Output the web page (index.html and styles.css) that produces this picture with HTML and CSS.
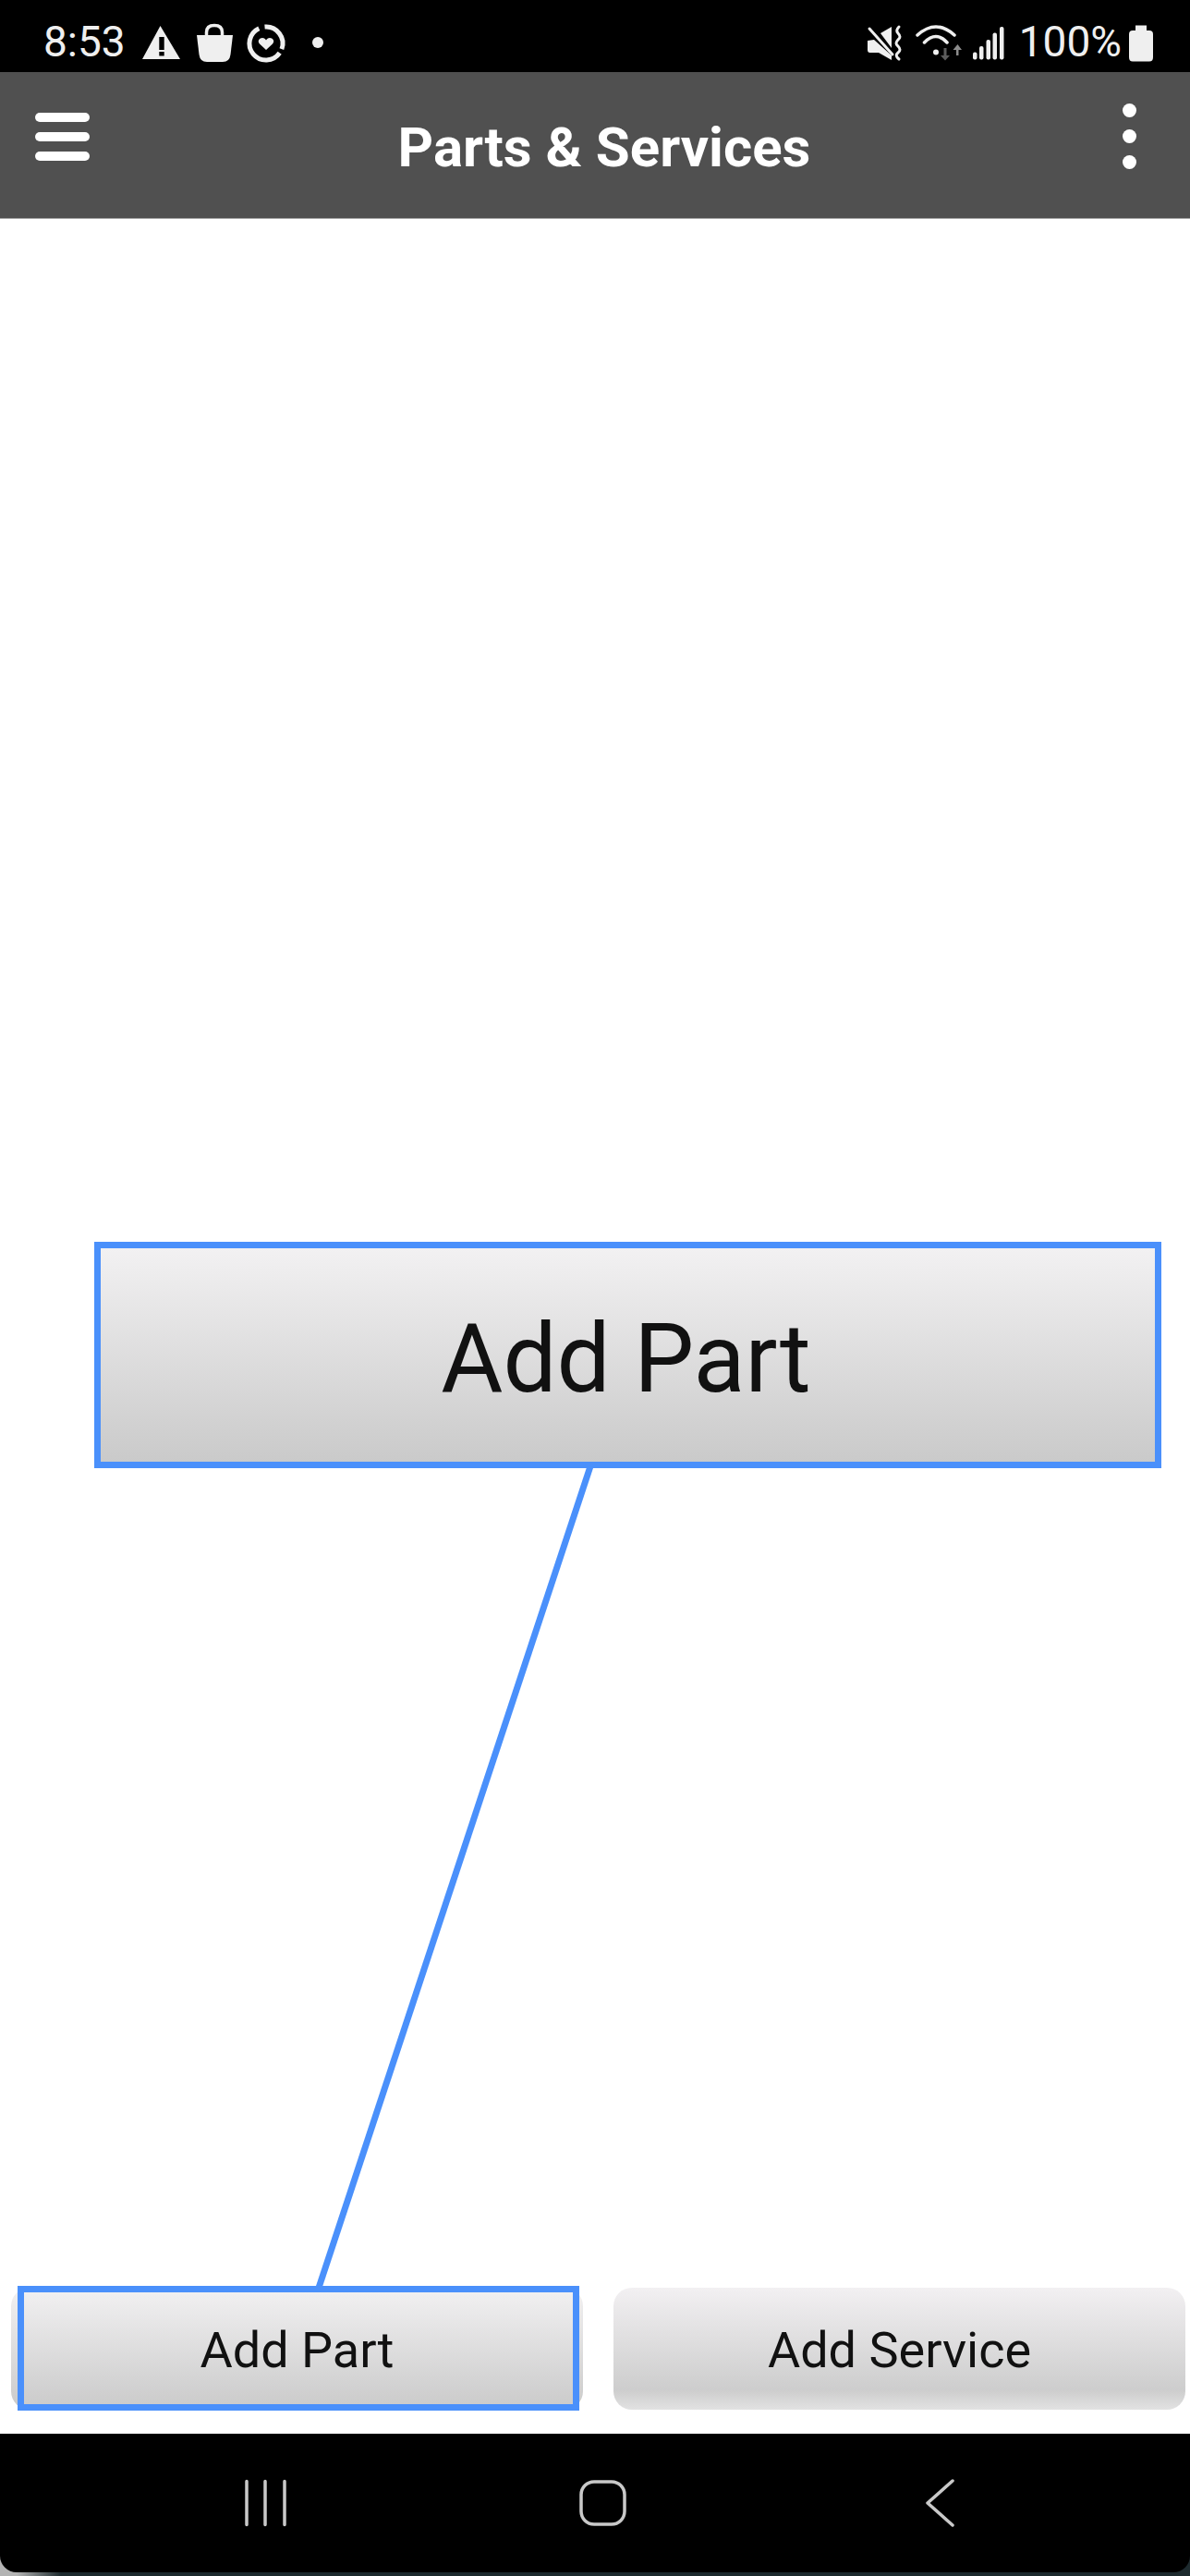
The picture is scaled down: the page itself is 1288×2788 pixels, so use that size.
FILE: index.html
```html
<!DOCTYPE html>
<html lang="en">

<head>
  <meta charset="UTF-8">
  <meta name="viewport" content="width=device-width, initial-scale=1.0">
  <title>Parts &amp; Services</title>
  <link rel="stylesheet" href="styles.css">
</head>

<body>
  <div class="status-bar">
    <span class="status-time">8:53</span>
    <svg class="notif-icons" width="206" height="70" viewBox="150 4 206 70">
      <path fill-rule="evenodd" d="M173.5 28 L195 64 H154 Z M172.3 40 V54 H177.7 V40 Z M172.3 56 V60.5 H177.7 V56 Z" />
      <path d="M213 38 H252 L249.5 59 Q248.5 67 241 67 H224 Q216.5 67 215.5 59 Z" />
      <path class="line" d="M223.5 39 V35 Q223.5 27.5 232 27.5 Q240.5 27.5 240.5 35 V39" />
      <path class="line ring" d="M286.5 29.1 A18 18 0 0 1 304.9 53.2" />
      <path class="line ring" d="M302.7 57.3 A18 18 0 1 1 280.3 30.7" />
      <path d="M288 54 L281 47.5 C278 44 281 41 284 41 C286 41 287 42 288 43.5 C289 42 290 41 292 41 C295 41 298 44 295 47.5 Z" />
      <circle cx="344" cy="46" r="6" />
    </svg>
    <div class="status-right">
      <svg class="system-icons" width="152" height="70" viewBox="934 4 152 70">
        <path d="M950 36 L962 29 V52 Z" />
        <path d="M936 44 L943 43 L962 60 V65 L948 57 H938.5 Q936 57 936 54 Z" />
        <path class="line thin" d="M938 31 L963 59" />
        <path class="line thin" d="M970 29 q-4 4 -1 7 q4 4 0 7 q-4 4 0 7 q4 4 0 7 q-4 3 1 7" />
        <path class="line wifi" d="M990 38 Q1010 20 1030 38" />
        <path class="line wifi" d="M997.5 46 Q1010 33 1022 46" />
        <circle cx="1010" cy="56.5" r="3" />
        <path class="arrow-down" d="M1018.5 52 V60 H1015 L1020 65.5 L1025 60 H1021.5 V52 Z" />
        <path class="arrow-up" d="M1032 60 V54 H1028.5 L1033.5 48 L1038 54 H1034.5 V60 Z" />
        <rect x="1050" y="56.5" width="4.5" height="8" rx="2" />
        <rect x="1057" y="50" width="4.5" height="14.5" rx="2" />
        <rect x="1064.5" y="43" width="4.5" height="21.5" rx="2" />
        <rect x="1071.5" y="35.5" width="4.5" height="29" rx="2" />
        <rect x="1079" y="29" width="4.5" height="35.5" rx="2" />
      </svg>
      <span class="status-battery">100%</span>
      <svg class="battery" width="26" height="40" viewBox="0 0 26 40">
        <path d="M7 0.5 H19 V6 H22 Q26 6 26 10 V35 Q26 39.5 22 39.5 H4 Q0 39.5 0 35 V10 Q0 6 4 6 H7 Z" />
      </svg>
    </div>
  </div>

  <header class="app-bar">
    <div class="menu-icon"><span></span><span></span><span></span></div>
    <h1 class="app-title">Parts &amp; Services</h1>
    <div class="more-icon"><span></span><span></span><span></span></div>
  </header>

  <main class="content">
    <div class="zoomed-button">Add Part</div>
    <svg class="pointer" width="1288" height="2397" viewBox="0 0 1288 2397">
      <line x1="639" y1="1350" x2="345" y2="2239" />
    </svg>
    <div class="actions">
      <button class="action-btn action-part">Add Part</button>
      <button class="action-btn action-service">Add Service</button>
    </div>
  </main>

  <nav class="nav-bar">
    <svg class="nav-icon" width="64" height="56" viewBox="0 0 64 56">
      <path d="M12 4.5 V51.5 M32 4.5 V51.5 M53 4.5 V51.5" />
    </svg>
    <svg class="nav-icon" width="64" height="56" viewBox="0 0 64 56">
      <rect x="8" y="5" width="47" height="46" rx="14" />
    </svg>
    <svg class="nav-icon" width="64" height="56" viewBox="0 0 64 56">
      <path d="M45 4 L18 28 L45 52" />
    </svg>
  </nav>
</body>
</html>
```

FILE: styles.css
```css
* {
	box-sizing: border-box;
}

html,
body {
	margin: 0;
	padding: 0;
}

body {
	width: 1288px;
	height: 2788px;
	display: flex;
	flex-direction: column;
	overflow: hidden;
	background: linear-gradient(to right, #b4b4b4 18px, #1d2a2e 66px);
	font-family: Roboto, "Liberation Sans", sans-serif;
}

/* status bar */
.status-bar {
	flex: 0 0 78px;
	display: flex;
	align-items: center;
	padding: 0 40px 0 47px;
	background: #000;
	color: #efefef;
	fill: #efefef;
}

.status-time {
	font-size: 46px;
	line-height: 66px;
	padding-top: 12px;
	width: 103px;
}

.status-right {
	margin-left: auto;
	display: flex;
	align-items: center;
}

.status-battery {
	font-size: 46px;
	line-height: 66px;
	padding-top: 12px;
	margin-left: 14px;
	margin-right: 8px;
}

.battery {
	margin-top: 15px;
}

.line {
	fill: none;
	stroke: #efefef;
	stroke-width: 3.5;
	stroke-linecap: round;
}

.ring {
	stroke-width: 5;
	stroke-linecap: butt;
}

.thin {
	stroke-width: 3;
}

.wifi {
	stroke-width: 3.5;
}

.arrow-down {
	fill: #5c5c5c;
}

.arrow-up {
	fill: #8c8c8c;
}

/* app bar */
.app-bar {
	flex: 0 0 159px;
	display: flex;
	align-items: flex-start;
	padding: 0 58px 0 38px;
	background: #505050;
	border-bottom: 1px solid #a8a8a8;
}

.menu-icon {
	width: 59px;
	margin-top: 44px;
	display: flex;
	flex-direction: column;
	gap: 11px;
}

.menu-icon span {
	height: 10px;
	border-radius: 5px;
	background: #fff;
}

.app-title {
	flex: 1;
	margin: 49px 4px 0 0;
	font-size: 60px;
	line-height: 66px;
	font-weight: 700;
	text-align: center;
	color: #fff;
}

.more-icon {
	width: 15px;
	margin-top: 34px;
	display: flex;
	flex-direction: column;
	gap: 13px;
}

.more-icon span {
	height: 15px;
	border-radius: 50%;
	background: #fff;
}

/* content */
.content {
	flex: 1;
	position: relative;
	display: flex;
	flex-direction: column;
	justify-content: flex-end;
	background: #fff;
}

.zoomed-button {
	position: absolute;
	left: 102px;
	top: 1107px;
	width: 1155px;
	height: 245px;
	display: flex;
	align-items: center;
	justify-content: center;
	border: 7px solid #4a90fb;
	background: linear-gradient(to bottom, #f2f1f2, #cacaca);
	color: #111;
	font-size: 103px;
	padding: 8px 4px 0 0;
}

.pointer {
	position: absolute;
	left: 0;
	top: 0;
}

.pointer line {
	stroke: #4a90fb;
	stroke-width: 7;
}

.actions {
	display: flex;
	gap: 33px;
	padding: 0 5px 26px 12px;
}

.action-btn {
	flex: 1;
	height: 132px;
	border: none;
	border-radius: 20px;
	padding: 3px 0 0;
	color: #111;
	font-family: inherit;
	font-size: 54px;
}

.action-part {
	position: relative;
	background: linear-gradient(to bottom, #f2f1f2, #cacaca);
}

/* blue highlight around the first button */
.action-part::after {
	content: "";
	position: absolute;
	left: 7px;
	right: 4px;
	top: -2px;
	bottom: -1px;
	border: 7px solid #4a90fb;
}

.action-service {
	background: linear-gradient(to bottom, #f2f0f2, #cdcdcd 84%, #e2e2e2);
}

/* android nav */
.nav-bar {
	flex: 0 0 150px;
	display: flex;
	align-items: center;
	justify-content: space-between;
	padding: 0 238px 0 255px;
	margin-bottom: 4px;
	background: #000;
	border-radius: 0 0 18px 18px;
}

.nav-icon {
	fill: none;
	stroke: #c9c9c9;
	stroke-width: 3.5;
	stroke-linecap: round;
	stroke-linejoin: round;
}
```
